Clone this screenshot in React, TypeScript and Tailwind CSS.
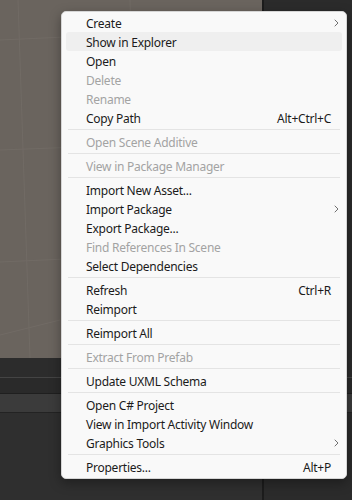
import type { JSX } from 'react';

type Entry =
  | { kind: 'item'; label: string; shortcut?: string; submenu?: boolean; disabled?: boolean; hover?: boolean }
  | { kind: 'sep' };

const ENTRIES: Entry[] = [
  { kind: 'item', label: 'Create', submenu: true },
  { kind: 'item', label: 'Show in Explorer', hover: true },
  { kind: 'item', label: 'Open' },
  { kind: 'item', label: 'Delete', disabled: true },
  { kind: 'item', label: 'Rename', disabled: true },
  { kind: 'item', label: 'Copy Path', shortcut: 'Alt+Ctrl+C' },
  { kind: 'sep' },
  { kind: 'item', label: 'Open Scene Additive', disabled: true },
  { kind: 'sep' },
  { kind: 'item', label: 'View in Package Manager', disabled: true },
  { kind: 'sep' },
  { kind: 'item', label: 'Import New Asset...' },
  { kind: 'item', label: 'Import Package', submenu: true },
  { kind: 'item', label: 'Export Package...' },
  { kind: 'item', label: 'Find References In Scene', disabled: true },
  { kind: 'item', label: 'Select Dependencies' },
  { kind: 'sep' },
  { kind: 'item', label: 'Refresh', shortcut: 'Ctrl+R' },
  { kind: 'item', label: 'Reimport' },
  { kind: 'sep' },
  { kind: 'item', label: 'Reimport All' },
  { kind: 'sep' },
  { kind: 'item', label: 'Extract From Prefab', disabled: true },
  { kind: 'sep' },
  { kind: 'item', label: 'Update UXML Schema' },
  { kind: 'sep' },
  { kind: 'item', label: 'Open C# Project' },
  { kind: 'item', label: 'View in Import Activity Window' },
  { kind: 'item', label: 'Graphics Tools', submenu: true },
  { kind: 'sep' },
  { kind: 'item', label: 'Properties...', shortcut: 'Alt+P' },
];

function Chevron(): JSX.Element {
  return (
    <svg width="5" height="8" viewBox="0 0 5 8" className="text-[#707070]" aria-hidden="true">
      <path d="M1 1l3 3-3 3" fill="none" stroke="currentColor" strokeWidth="1" strokeLinecap="round" strokeLinejoin="round" />
    </svg>
  );
}

export default function App(): JSX.Element {
  return (
    <div
      className="relative w-[352px] h-[500px] overflow-hidden bg-[#2f2f2f]"
      style={{ fontFamily: '"Segoe UI", "Noto Sans", "Open Sans", sans-serif' }}
    >
      {/* Editor backdrop */}
      <div className="flex flex-col h-full">
        <div className="flex h-[358px]">
          {/* Scene view */}
          <div className="w-[262px] h-full bg-[#6a645e]">
            <svg width="262" height="358" className="block" aria-hidden="true">
              <g stroke="#716b65" strokeWidth="1" fill="none">
                <path d="M0 40 L262 28" />
                <path d="M0 150 L262 140" />
                <path d="M0 262 L262 250" />
                <path d="M18 0 L30 358" />
                <path d="M130 0 L138 358" />
                <path d="M0 335 L60 320" />
              </g>
            </svg>
          </div>
          <div className="w-[2px] h-full bg-[#1c1c1c]" />
          <div className="flex-1 h-full bg-[#2b2b2b]" />
        </div>
        <div className="h-[19px] bg-[#2c2c2c]" />
        <div className="h-px bg-[#444444]" />
        <div className="h-[15px] bg-[#2a2a2a]" />
        <div className="h-px bg-[#1f1f1f]" />
        <div className="h-[18px] bg-[#3b3b3b]" />
        <div className="h-px bg-[#232323]" />
        <div className="flex flex-1">
          <div className="w-[262px] bg-[#2f2f2f]" />
          <div className="w-[2px] bg-[#1c1c1c]" />
          <div className="flex-1 bg-[#2b2b2b]" />
        </div>
      </div>

      {/* Context menu */}
      <div className="absolute left-[61px] top-[11px] w-[286px] rounded-[5px] border border-[#d6d6d6] bg-[#f9f9f9] pt-px pb-[2px] shadow-[0_4px_12px_rgba(0,0,0,0.35)]">
        {ENTRIES.map((e, i) =>
          e.kind === 'sep' ? (
            <div key={`sep-${i}`} className="py-[2px] px-[6px]">
              <div className="h-px bg-[#e4e4e4]" />
            </div>
          ) : (
            <div
              key={e.label}
              className={`mx-[4px] h-[19px] flex items-start pt-[3px] pl-[20px] pr-[11px] rounded-[3px] text-[12px] leading-[16px] tracking-[-0.25px] ${
                e.hover ? 'bg-[#efefef]' : ''
              } ${e.disabled ? 'text-[#a3a3a3]' : 'text-[#1b1b1b]'}`}
            >
              <span className="flex-1 whitespace-nowrap">{e.label}</span>
              {e.shortcut && <span className="whitespace-nowrap">{e.shortcut}</span>}
              {e.submenu && (
                <span className="-mr-[8px] pt-[3px]">
                  <Chevron />
                </span>
              )}
            </div>
          )
        )}
      </div>
    </div>
  );
}
